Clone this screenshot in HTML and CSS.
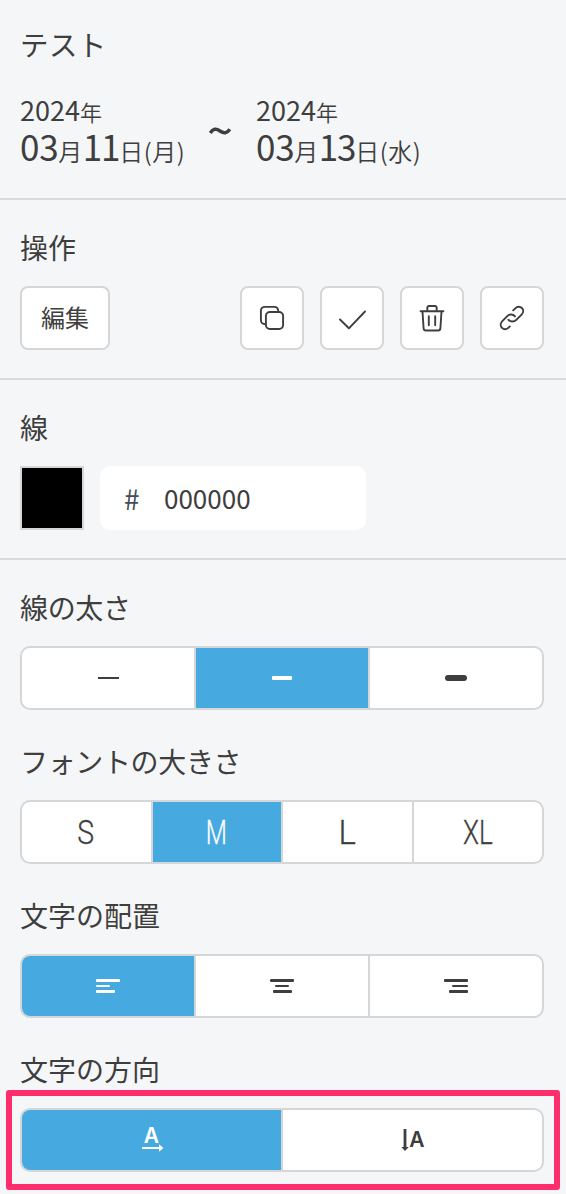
FILE: index.html
```html
<!DOCTYPE html>
<html lang="ja">
<head>
<meta charset="utf-8">
<title>テスト</title>
<link rel="stylesheet" href="styles.css">
</head>
<body>
<main class="panel">
  <section class="section summary">
    <h1 class="heading">テスト</h1>
    <div class="period">
      <div class="date"><div class="year"><span>2024</span>年</div><div class="day"><b>03</b>月<b class="tight">11</b>日(月)</div></div>
      <svg class="tilde" width="24" height="12" viewBox="0 0 24 12"><path d="M2.300 8C5 3.600 8 3.200 12 6s7 2.400 9.800-1.700" fill="none" stroke="currentColor" stroke-width="3.500"/></svg>
      <div class="date"><div class="year"><span>2024</span>年</div><div class="day"><b>03</b>月<b class="tight">13</b>日(水)</div></div>
    </div>
  </section>

  <section class="section">
    <h2 class="heading">操作</h2>
    <div class="actions">
      <button class="button edit">編集</button>
      <div class="icon-buttons">
        <button class="button icon"><svg width="28" height="28" viewBox="0 0 28 28"><rect x="7.900" y="8" width="17.200" height="17" rx="4"/><path d="M7.500 20.200C4.500 20.200 2.900 18.500 2.900 16V7C2.900 4.300 4.500 2.900 7 2.900h9c2.600 0 4.200 1.500 4.300 4.300"/></svg></button>
        <button class="button icon"><svg width="28" height="28" viewBox="0 0 28 28"><path d="M2 15.500l8.900 8.800L27 7.500"/></svg></button>
        <button class="button icon"><svg width="28" height="28" viewBox="0 0 28 28"><path d="M2.600 7.300h22.800M9.300 7V4q0-2 2-2h5.400q2 0 2 2v3M4.500 7.500l1.100 16.700q.2 2.300 2.300 2.300h12.200q2.100 0 2.300-2.300l1.100-16.700M10.800 12.300v9M17.200 12.300v9"/></svg></button>
        <button class="button icon"><svg width="28" height="28" viewBox="0 0 28 28"><path d="M15.200 6.400l2.100-2.100c2-2 4.700-2.200 6.600-.3s1.700 4.600-.3 6.600l-5.300 5.300c-2.200 2.200-5.800 2.200-7.800-.1M17 12.300c-1.900-2.300-5.500-2.400-7.700-.2l-5 5c-2 2-2.200 4.900-.3 6.800s4.600 1.700 6.600-.3l1.200-1.200"/></svg></button>
      </div>
    </div>
  </section>

  <section class="section">
    <h2 class="heading">線</h2>
    <div class="color-row">
      <div class="swatch"></div>
      <div class="color-field"><span class="hash">#</span><span class="hex">000000</span></div>
    </div>
  </section>

  <section class="section options">
    <div class="option">
      <h2 class="heading kana">線の太さ</h2>
      <div class="segments">
        <button class="segment"><i class="line thin"></i></button>
        <button class="segment active"><i class="line medium"></i></button>
        <button class="segment"><i class="line thick"></i></button>
      </div>
    </div>
    <div class="option">
      <h2 class="heading kana">フォントの大きさ</h2>
      <div class="segments">
        <button class="segment"><span class="size s">S</span></button>
        <button class="segment active"><span class="size m">M</span></button>
        <button class="segment"><span class="size l">L</span></button>
        <button class="segment"><span class="size xl">XL</span></button>
      </div>
    </div>
    <div class="option">
      <h2 class="heading">文字の配置</h2>
      <div class="segments">
        <button class="segment active"><span class="align left"><i></i><i></i><i></i></span></button>
        <button class="segment"><span class="align center"><i></i><i></i><i></i></span></button>
        <button class="segment"><span class="align right"><i></i><i></i><i></i></span></button>
      </div>
    </div>
    <div class="option highlighted">
      <h2 class="heading">文字の方向</h2>
      <div class="segments">
        <button class="segment active"><span class="direction horizontal"><span class="letter">A</span><svg width="22" height="8" viewBox="0 0 22 8"><path d="M0 2.900h17V.3L21.500 4 17 7.700V5.100H0z"/></svg></span></button>
        <button class="segment"><span class="direction vertical"><svg width="8" height="22" viewBox="0 0 8 22"><path d="M2.600 0v18H.3L4 22 7.700 18H5.400V0z"/></svg><span class="letter">A</span></span></button>
      </div>
      <div class="highlight"></div>
    </div>
  </section>
</main>
</body>
</html>
```
FILE: styles.css
```css
* { box-sizing: border-box; }
body {
  margin: 0;
  background: #f5f6f8;
  color: #3e3e3e;
  font-family: "Noto Sans CJK JP", sans-serif;
}
.panel { height: 1194px; overflow: hidden; }
.section { height: 180px; padding: 27px 22px 0 20px; border-bottom: 2px solid #d9dadc; }
.heading { margin: 0 0 19px; font-size: 28px; line-height: 40px; font-weight: 400; }
.kana { letter-spacing: -.35px; }
.summary { height: 200px; padding-top: 24px; }
.summary .heading { margin-bottom: 28px; font-size: 28.500px; letter-spacing: .4px; }
.period { display: flex; }
.date { width: 166px; white-space: nowrap; font-feature-settings: "palt"; }
.year { font-size: 22px; line-height: 36px; height: 36px; font-weight: 350; }
.year span { font-size: 27px; font-weight: 400; }
.day { font-size: 24px; line-height: 36px; height: 36px; font-weight: 350; letter-spacing: .5px; }
.day b { font-size: 35px; font-weight: 400; letter-spacing: -.3px; }
.day .tight { letter-spacing: -1.200px; }
.tilde { margin: 33px 24px 0 22px; }

button { font: inherit; color: inherit; padding: 0; }
.actions { display: flex; justify-content: space-between; }
.icon-buttons { display: flex; gap: 16px; }
.button {
  display: flex; align-items: center; justify-content: center;
  width: 64px; height: 64px;
  background: #fff; border: 2px solid #d5d6d7; border-radius: 8px;
}
.edit { width: 90px; padding-bottom: 3px; font-size: 24px; }
.icon svg { fill: none; stroke: currentColor; stroke-width: 1.9; stroke-linecap: round; stroke-linejoin: round; }

.color-row { display: flex; gap: 16px; }
.swatch { width: 64px; height: 64px; background: #000; border: 2px solid #d5d6d7; }
.color-field {
  display: flex; align-items: center; gap: 24px;
  width: 266px; height: 64px; padding: 0 0 1px 24px;
  background: #fff; border-radius: 10px; font-size: 26px;
}
.hash { width: 16px; font-size: 28px; color: #454d57; }

.options { height: 634px; border: 0; display: flex; flex-direction: column; gap: 31px; }
.option { height: 123px; }
.segments {
  display: flex; height: 64px; overflow: hidden;
  background: #fff; border: 2px solid #d5d6d7; border-radius: 10px;
}
.segment {
  flex: 1 1 0; display: flex; align-items: center; justify-content: center;
  background: none; border: 0;
}
.segment + .segment { border-left: 2px solid #d5d6d7; }
.segment.active { background: #46a9df; color: #fff; }
.line { background: currentColor; border-radius: 3px; }
.thin { width: 21px; height: 2px; border-radius: 0; }
.medium { width: 20px; height: 4px; border-radius: 1px; }
.thick { width: 22px; height: 6px; }
.size { font: 300 33px/60px Roboto, sans-serif; padding-top: 2px; -webkit-text-stroke: .3px currentColor; }
.s { transform: scaleX(.86); }
.m { transform: scaleX(.74); }
.xl { transform: scaleX(.79); }

.align { display: flex; flex-direction: column; gap: 2.500px; width: 24px; }
.align i { height: 2.900px; border-radius: 1px; background: currentColor; }
.align i:first-child { width: 24px; }
.align i:nth-child(2) { width: 14px; }
.align i:nth-child(3) { width: 19px; }
.right i:nth-child(2) { width: 16px; }
.center { align-items: center; }
.right { align-items: flex-end; }

.direction { display: flex; align-items: center; }
.direction svg { fill: currentColor; display: block; }
.horizontal { flex-direction: column; padding-left: 3px; }
.letter { font: 600 21px/16px Inter, sans-serif; }
.horizontal .letter { padding-right: 3px; }
.vertical .letter { margin-right: -1px; }
.highlighted { position: relative; }
.highlight {
  position: absolute; top: 40.500px; left: -14.500px; right: -16px; height: 100.500px;
  border: 6px solid #ff2d6b; border-radius: 3px;
}
```
